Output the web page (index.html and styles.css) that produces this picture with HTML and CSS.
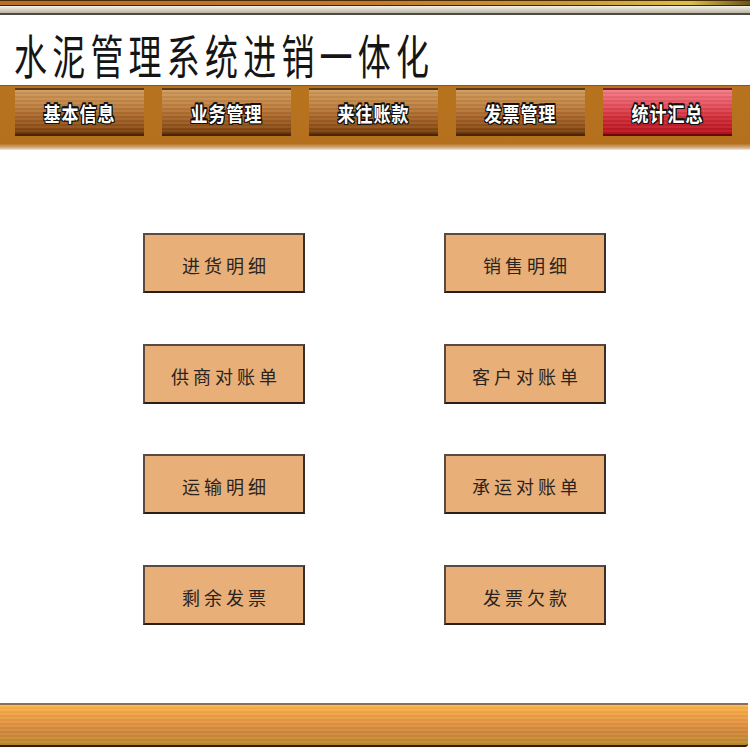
FILE: index.html
```html
<!DOCTYPE html>
<html lang="zh">
<head>
<meta charset="utf-8">
<title>水泥管理系统进销一体化</title>
<link rel="stylesheet" href="styles.css">
</head>
<body>
<div class="page">
  <div class="top-strip"></div>
  <div class="top-rule"></div>
  <header class="title-row">
    <h1 class="title">水泥管理系统进销一体化</h1>
  </header>
  <nav class="nav">
    <div class="nav-btn"><span>基本信息</span></div>
    <div class="nav-btn"><span>业务管理</span></div>
    <div class="nav-btn"><span>来往账款</span></div>
    <div class="nav-btn"><span>发票管理</span></div>
    <div class="nav-btn active"><span>统计汇总</span></div>
  </nav>
  <main class="main">
    <div class="grid">
      <div class="item">进货明细</div>
      <div class="item">销售明细</div>
      <div class="item">供商对账单</div>
      <div class="item">客户对账单</div>
      <div class="item">运输明细</div>
      <div class="item">承运对账单</div>
      <div class="item">剩余发票</div>
      <div class="item">发票欠款</div>
    </div>
  </main>
  <footer class="bottom-bar"></footer>
</div>
</body>
</html>
```

FILE: styles.css
```css
html, body {
  margin: 0;
  padding: 0;
  background: #ffffff;
}
.page {
  width: 750px;
  height: 750px;
  display: flex;
  flex-direction: column;
  overflow: hidden;
  font-family: "Noto Sans CJK SC", "Noto Sans", sans-serif;
}
.top-strip {
  height: 4px;
  border-top: 1px solid #4a2a08;
  border-bottom: 1px solid #3a2408;
  background: linear-gradient(90deg, #b86e26 0%, #c27c2c 50%, #c89a34 75%, #d8c048 92%, #6a5418 100%);
}
.top-rule {
  height: 7px;
  background: linear-gradient(#f4f2ec, #cdc7b8 70%, #b8b2a4);
  border-bottom: 2px solid #4e4a44;
}
.title-row {
  height: 70px;
  display: flex;
  align-items: center;
  padding-left: 14px;
}
.title {
  margin: 0;
  font-size: 33px;
  font-weight: 400;
  color: #151515;
  letter-spacing: 5.2px;
  transform: scaleY(1.42);
  transform-origin: left center;
  line-height: 1;
  margin-top: 8px;
}
.nav {
  border-top: 1px solid #6a5a4a;
  background: linear-gradient(#b8731f, #b5701e 90%, #d9b48e 97%, #f4ece4);
  display: flex;
  gap: 18px;
  padding: 2px 17px 0 15px;
  box-sizing: border-box;
  height: 65px;
}
.nav-btn {
  width: 129px;
  height: 48px;
  box-sizing: border-box;
  border-top: 2px solid #5a3a1a;
  border-bottom: 2px solid #4a2406;
  background:
    repeating-linear-gradient(180deg, rgba(255,255,255,0.06) 0 2px, rgba(0,0,0,0.04) 2px 4px),
    linear-gradient(#cf9a5a 0%, #c08040 35%, #a8662a 60%, #8e4e16 85%, #6a3608 100%);
  display: flex;
  align-items: center;
  justify-content: center;
}
.nav-btn.active {
  border-top-color: #7a2020;
  border-bottom-color: #6a0808;
  background:
    repeating-linear-gradient(180deg, rgba(255,255,255,0.06) 0 2px, rgba(0,0,0,0.04) 2px 4px),
    linear-gradient(#f47a86 0%, #e4505c 35%, #d02a36 65%, #b8101c 100%);
}
.nav-btn span {
  display: inline-block;
  font-size: 17px;
  font-weight: 700;
  color: #ffffff;
  letter-spacing: 1px;
  transform: scale(1, 1.22);
  text-shadow:
    1px 0 0 #111, -1px 0 0 #111, 0 1px 0 #111, 0 -1px 0 #111,
    1px 1px 0 #111, -1px -1px 0 #111, 1px -1px 0 #111, -1px 1px 0 #111;
}
.main {
  flex: 1;
  padding-top: 83px;
  padding-left: 143px;
}
.grid {
  display: grid;
  grid-template-columns: 162px 162px;
  grid-auto-rows: 60px;
  column-gap: 139px;
  row-gap: 50.5px;
}
.item {
  box-sizing: border-box;
  background: #e8af78;
  border: 2px solid #5a4a40;
  border-bottom-color: #2a1e18;
  border-right-color: #3a2e28;
  display: flex;
  align-items: center;
  justify-content: center;
  font-size: 18px;
  font-weight: 400;
  color: #2a2420;
  letter-spacing: 4px;
  padding-left: 4px;
  padding-top: 4px;
}
.bottom-bar {
  height: 40px;
  margin-bottom: 3px;
  margin-right: 2px;
  border-top: 2px solid #8a6e5a;
  border-bottom: 2px solid #3a1a04;
  border-radius: 0 0 3px 0;
  background:
    repeating-linear-gradient(180deg, rgba(255,255,255,0.05) 0 2px, rgba(0,0,0,0.03) 2px 4px),
    linear-gradient(#fcb848 0%, #f2a444 20%, #e49642 45%, #d4883c 65%, #c88a34 85%, #b88a2c 100%);
}
```
